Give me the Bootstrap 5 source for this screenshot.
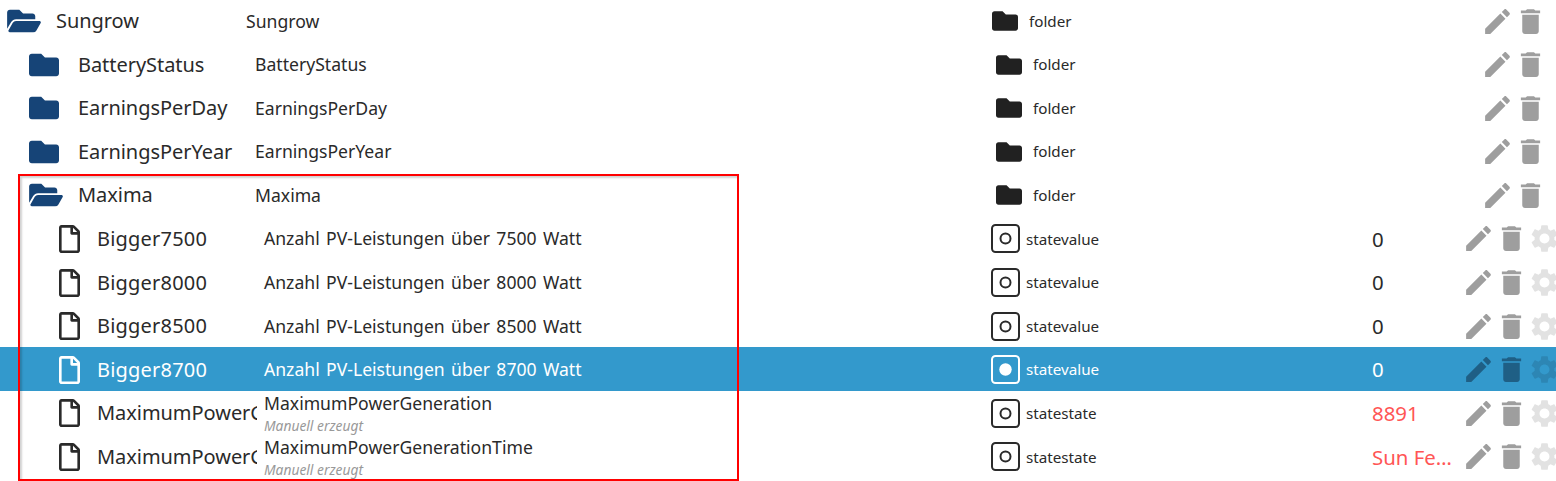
<!DOCTYPE html>
<html lang="de">
<head>
<meta charset="utf-8">
<title>Objects</title>
<link href="https://cdn.jsdelivr.net/npm/bootstrap@5.3.0/dist/css/bootstrap.min.css" rel="stylesheet">
<style>
html,body{height:481px;overflow:hidden;background:#fff}
body{font-family:"Noto Sans","Open Sans",sans-serif;color:#2a2a2a;position:relative}
.obj-list{margin-top:-1.8px}
.obj-row{height:43.6px;white-space:nowrap;padding-top:2px;width:1600px}
.obj-row.sel{background:#3399cc;color:#fff}
.name-cell{font-size:20px;letter-spacing:-.05px;overflow:hidden}
.name-text{overflow:hidden;flex:1 1 0;min-width:0}
.name-num{letter-spacing:.2px}
.lv0 .name-cell{width:246px;padding-left:7px}
.lv1 .name-cell{width:255px;padding-left:29px}
.lv2 .name-cell{width:264px;padding-left:59px;padding-right:7px}
.tree-open{width:34px;height:30px;margin-right:15px}
.tree-closed{width:30px;height:30px;margin-right:19px}
.tree-file{width:21px;height:28px;margin-right:17px}
.ic{fill:currentColor;flex:none;display:block}
.lv0 .tree-open,.lv1 .tree-open,.tree-closed{color:#164477}
.desc-cell{font-size:17.6px;line-height:21px;word-spacing:1.8px}
.lv0 .desc-cell{width:745px}
.lv1 .desc-cell{width:736px}
.lv2 .desc-cell{width:727px}
.desc-sub{font-size:13.8px;font-style:italic;color:#999;line-height:15px;margin-top:4px;word-spacing:0}
.type-cell{width:381px;font-size:15.2px}
.lv0 .type-cell{padding-left:1px}
.lv1 .type-cell{padding-left:5px}
.type-folder{width:26px;height:26px;margin-right:11px;color:#212121}
.type-state{width:29px;height:29px;margin-right:6px}
.value-cell{font-size:20.4px}
.lv2 .value-cell{width:90px}
.lv0 .value-cell,.lv1 .value-cell{width:109px}
.value-red{color:#ff5555}
.val-clip{display:block;width:81px}
.act{width:33px;height:33px;color:#9e9e9e}
.act-gear{color:#e2e2e2}
.sel .act{color:#1f5f85}
.sel .act-gear{color:#2d86b4}
.marker{position:absolute;left:18px;top:174px;width:721px;height:307px;border:2px solid #f00;box-shadow:inset 2px 2px 2px rgba(0,0,0,.18);pointer-events:none}
</style>
</head>
<body>
<svg width="0" height="0" class="position-absolute">
<symbol id="i-open" viewBox="0 0 576 512"><path d="M572.694 292.093L500.27 416.248A63.997 63.997 0 0 1 444.989 448H45.025c-18.523 0-30.064-20.093-20.731-36.093l72.424-124.155A64 64 0 0 1 152 256h399.964c18.523 0 30.064 20.093 20.73 36.093zM152 224h328v-48c0-26.51-21.49-48-48-48H272l-64-64H48C21.49 64 0 85.49 0 112v278.046l69.077-118.418C86.214 242.25 118.112 224 152 224z"/></symbol>
<symbol id="i-folder" viewBox="0 0 512 512"><path d="M464 128H272l-64-64H48C21.49 64 0 85.49 0 112v288c0 26.51 21.49 48 48 48h416c26.51 0 48-21.49 48-48V176c0-26.51-21.49-48-48-48z"/></symbol>
<symbol id="i-file" viewBox="0 0 384 512"><path d="M369.9 97.9L286 14C277 5 264.8-.1 252.1-.1H48C21.5 0 0 21.5 0 48v416c0 26.5 21.5 48 48 48h288c26.5 0 48-21.5 48-48V131.9c0-12.7-5.1-25-14.1-34zM332.1 128H256V51.9l76.1 76.1zM48 464V48h160v104c0 13.3 10.7 24 24 24h104v288H48z"/></symbol>
<symbol id="i-state" viewBox="0 0 29 29"><rect x="1" y="1" width="27" height="27" rx="3.5" fill="none" stroke="currentColor" stroke-width="2"/><circle cx="14.5" cy="14.5" r="5" fill="none" stroke="currentColor" stroke-width="2"/></symbol>
<symbol id="i-state-on" viewBox="0 0 29 29"><rect x="1" y="1" width="27" height="27" rx="3.5" fill="none" stroke="currentColor" stroke-width="2"/><circle cx="14.5" cy="14.5" r="6.2" fill="currentColor"/></symbol>
<symbol id="i-edit" viewBox="0 0 24 24"><path d="M3 17.25V21h3.75L17.81 9.94l-3.75-3.75L3 17.25zM20.71 7.04c.39-.39.39-1.02 0-1.41l-2.34-2.34c-.39-.39-1.02-.39-1.41 0l-1.83 1.83 3.75 3.75 1.83-1.83z"/></symbol>
<symbol id="i-trash" viewBox="0 0 24 24"><path d="M6 19c0 1.1.9 2 2 2h8c1.1 0 2-.9 2-2V7H6v12zM19 4h-3.5l-1-1h-5l-1 1H5v2h14V4z"/></symbol>
<symbol id="i-gear" viewBox="0 0 24 24"><path d="M19.14 12.94c.04-.3.06-.61.06-.94 0-.32-.02-.64-.07-.94l2.03-1.58c.18-.14.23-.41.12-.61l-1.92-3.32c-.12-.22-.37-.29-.59-.22l-2.39.96c-.5-.38-1.03-.7-1.62-.94l-.36-2.54c-.04-.24-.24-.41-.48-.41h-3.84c-.24 0-.43.17-.47.41l-.36 2.54c-.59.24-1.13.57-1.62.94l-2.39-.96c-.22-.08-.47 0-.59.22L2.74 8.87c-.12.21-.08.47.12.61l2.03 1.58c-.05.3-.09.63-.09.94s.02.64.07.94l-2.03 1.58c-.18.14-.23.41-.12.61l1.92 3.32c.12.22.37.29.59.22l2.39-.96c.5.38 1.03.7 1.62.94l.36 2.54c.05.24.24.41.48.41h3.84c.24 0 .44-.17.47-.41l.36-2.54c.59-.24 1.13-.56 1.62-.94l2.39.96c.22.08.47 0 .59-.22l1.92-3.32c.12-.22.07-.47-.12-.61l-2.01-1.58zM12 15.6c-1.98 0-3.6-1.62-3.6-3.6s1.62-3.6 3.6-3.6 3.6 1.62 3.6 3.6-1.62 3.6-3.6 3.6z"/></symbol>
</svg>

<div class="obj-list">
<div class="obj-row lv0 d-flex align-items-center">
<div class="name-cell d-flex align-items-center flex-shrink-0"><svg class="ic tree-open"><use href="#i-open"/></svg><span class="name-text">Sungrow</span></div>
<div class="desc-cell flex-shrink-0">Sungrow</div>
<div class="type-cell d-flex align-items-center flex-shrink-0"><svg class="ic type-folder"><use href="#i-folder"/></svg>folder</div>
<div class="value-cell flex-shrink-0"></div>
<svg class="ic act"><use href="#i-edit"/></svg><svg class="ic act"><use href="#i-trash"/></svg>
</div>
<div class="obj-row lv1 d-flex align-items-center">
<div class="name-cell d-flex align-items-center flex-shrink-0"><svg class="ic tree-closed"><use href="#i-folder"/></svg><span class="name-text">BatteryStatus</span></div>
<div class="desc-cell flex-shrink-0">BatteryStatus</div>
<div class="type-cell d-flex align-items-center flex-shrink-0"><svg class="ic type-folder"><use href="#i-folder"/></svg>folder</div>
<div class="value-cell flex-shrink-0"></div>
<svg class="ic act"><use href="#i-edit"/></svg><svg class="ic act"><use href="#i-trash"/></svg>
</div>
<div class="obj-row lv1 d-flex align-items-center">
<div class="name-cell d-flex align-items-center flex-shrink-0"><svg class="ic tree-closed"><use href="#i-folder"/></svg><span class="name-text">EarningsPerDay</span></div>
<div class="desc-cell flex-shrink-0">EarningsPerDay</div>
<div class="type-cell d-flex align-items-center flex-shrink-0"><svg class="ic type-folder"><use href="#i-folder"/></svg>folder</div>
<div class="value-cell flex-shrink-0"></div>
<svg class="ic act"><use href="#i-edit"/></svg><svg class="ic act"><use href="#i-trash"/></svg>
</div>
<div class="obj-row lv1 d-flex align-items-center">
<div class="name-cell d-flex align-items-center flex-shrink-0"><svg class="ic tree-closed"><use href="#i-folder"/></svg><span class="name-text">EarningsPerYear</span></div>
<div class="desc-cell flex-shrink-0">EarningsPerYear</div>
<div class="type-cell d-flex align-items-center flex-shrink-0"><svg class="ic type-folder"><use href="#i-folder"/></svg>folder</div>
<div class="value-cell flex-shrink-0"></div>
<svg class="ic act"><use href="#i-edit"/></svg><svg class="ic act"><use href="#i-trash"/></svg>
</div>
<div class="obj-row lv1 d-flex align-items-center">
<div class="name-cell d-flex align-items-center flex-shrink-0"><svg class="ic tree-open"><use href="#i-open"/></svg><span class="name-text">Maxima</span></div>
<div class="desc-cell flex-shrink-0">Maxima</div>
<div class="type-cell d-flex align-items-center flex-shrink-0"><svg class="ic type-folder"><use href="#i-folder"/></svg>folder</div>
<div class="value-cell flex-shrink-0"></div>
<svg class="ic act"><use href="#i-edit"/></svg><svg class="ic act"><use href="#i-trash"/></svg>
</div>
<div class="obj-row lv2 d-flex align-items-center">
<div class="name-cell d-flex align-items-center flex-shrink-0"><svg class="ic tree-file"><use href="#i-file"/></svg><span class="name-text name-num">Bigger7500</span></div>
<div class="desc-cell flex-shrink-0">Anzahl PV-Leistungen über 7500 Watt</div>
<div class="type-cell d-flex align-items-center flex-shrink-0"><svg class="ic type-state"><use href="#i-state"/></svg>statevalue</div>
<div class="value-cell flex-shrink-0">0</div>
<svg class="ic act"><use href="#i-edit"/></svg><svg class="ic act"><use href="#i-trash"/></svg><svg class="ic act act-gear"><use href="#i-gear"/></svg>
</div>
<div class="obj-row lv2 d-flex align-items-center">
<div class="name-cell d-flex align-items-center flex-shrink-0"><svg class="ic tree-file"><use href="#i-file"/></svg><span class="name-text name-num">Bigger8000</span></div>
<div class="desc-cell flex-shrink-0">Anzahl PV-Leistungen über 8000 Watt</div>
<div class="type-cell d-flex align-items-center flex-shrink-0"><svg class="ic type-state"><use href="#i-state"/></svg>statevalue</div>
<div class="value-cell flex-shrink-0">0</div>
<svg class="ic act"><use href="#i-edit"/></svg><svg class="ic act"><use href="#i-trash"/></svg><svg class="ic act act-gear"><use href="#i-gear"/></svg>
</div>
<div class="obj-row lv2 d-flex align-items-center">
<div class="name-cell d-flex align-items-center flex-shrink-0"><svg class="ic tree-file"><use href="#i-file"/></svg><span class="name-text name-num">Bigger8500</span></div>
<div class="desc-cell flex-shrink-0">Anzahl PV-Leistungen über 8500 Watt</div>
<div class="type-cell d-flex align-items-center flex-shrink-0"><svg class="ic type-state"><use href="#i-state"/></svg>statevalue</div>
<div class="value-cell flex-shrink-0">0</div>
<svg class="ic act"><use href="#i-edit"/></svg><svg class="ic act"><use href="#i-trash"/></svg><svg class="ic act act-gear"><use href="#i-gear"/></svg>
</div>
<div class="obj-row lv2 sel d-flex align-items-center">
<div class="name-cell d-flex align-items-center flex-shrink-0"><svg class="ic tree-file"><use href="#i-file"/></svg><span class="name-text name-num">Bigger8700</span></div>
<div class="desc-cell flex-shrink-0">Anzahl PV-Leistungen über 8700 Watt</div>
<div class="type-cell d-flex align-items-center flex-shrink-0"><svg class="ic type-state"><use href="#i-state-on"/></svg>statevalue</div>
<div class="value-cell flex-shrink-0">0</div>
<svg class="ic act"><use href="#i-edit"/></svg><svg class="ic act"><use href="#i-trash"/></svg><svg class="ic act act-gear"><use href="#i-gear"/></svg>
</div>
<div class="obj-row lv2 d-flex align-items-center">
<div class="name-cell d-flex align-items-center flex-shrink-0"><svg class="ic tree-file"><use href="#i-file"/></svg><span class="name-text">MaximumPowerGeneration</span></div>
<div class="desc-cell flex-shrink-0"><div>MaximumPowerGeneration</div><div class="desc-sub">Manuell erzeugt</div></div>
<div class="type-cell d-flex align-items-center flex-shrink-0"><svg class="ic type-state"><use href="#i-state"/></svg>statestate</div>
<div class="value-cell value-red flex-shrink-0">8891</div>
<svg class="ic act"><use href="#i-edit"/></svg><svg class="ic act"><use href="#i-trash"/></svg><svg class="ic act act-gear"><use href="#i-gear"/></svg>
</div>
<div class="obj-row lv2 d-flex align-items-center">
<div class="name-cell d-flex align-items-center flex-shrink-0"><svg class="ic tree-file"><use href="#i-file"/></svg><span class="name-text">MaximumPowerGenerationTime</span></div>
<div class="desc-cell flex-shrink-0"><div>MaximumPowerGenerationTime</div><div class="desc-sub">Manuell erzeugt</div></div>
<div class="type-cell d-flex align-items-center flex-shrink-0"><svg class="ic type-state"><use href="#i-state"/></svg>statestate</div>
<div class="value-cell value-red flex-shrink-0"><span class="val-clip text-truncate">Sun Feb 20 2022</span></div>
<svg class="ic act"><use href="#i-edit"/></svg><svg class="ic act"><use href="#i-trash"/></svg><svg class="ic act act-gear"><use href="#i-gear"/></svg>
</div>
</div>
<div class="marker"></div>
</body>
</html>
